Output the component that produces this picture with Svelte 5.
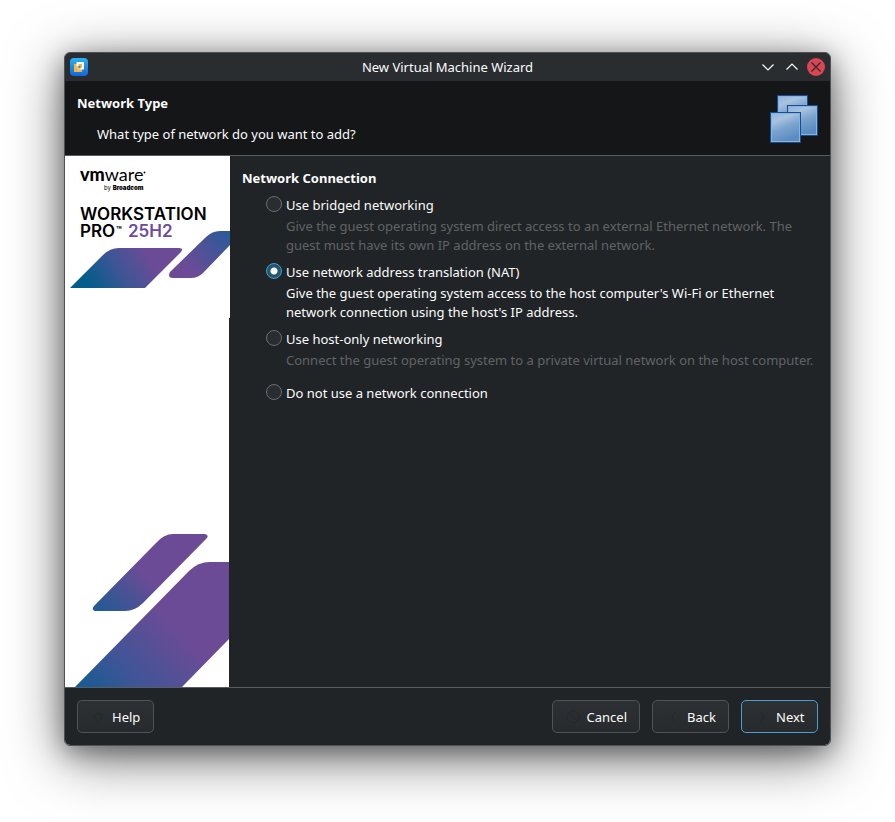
<script>
  const options = [
    {
      id: 'bridged',
      label: 'Use bridged networking',
      text: 'Give the guest operating system direct access to an external Ethernet network. The guest must have its own IP address on the external network.'
    },
    {
      id: 'nat',
      label: 'Use network address translation (NAT)',
      text: "Give the guest operating system access to the host computer's Wi-Fi or Ethernet network connection using the host's IP address."
    },
    {
      id: 'hostonly',
      label: 'Use host-only networking',
      text: 'Connect the guest operating system to a private virtual network on the host computer.'
    },
    { id: 'none', label: 'Do not use a network connection', text: '' }
  ];

  let selected = $state('nat');
</script>

<div class="desktop">
  <main class="window">
    <header class="titlebar">
      <svg class="appicon" viewBox="0 0 18 18" aria-hidden="true">
        <defs>
          <linearGradient id="tile" x1="0" y1="0" x2="0" y2="1">
            <stop offset="0" stop-color="#27b4f2" />
            <stop offset="1" stop-color="#1267dc" />
          </linearGradient>
        </defs>
        <rect width="18" height="18" rx="4" fill="url(#tile)" />
        <rect x="5" y="7" width="6" height="6" fill="none" stroke="#f9b53c" stroke-width="2" />
        <rect x="7.500" y="5" width="5.500" height="5.500" fill="none" stroke="#fff" stroke-width="2" />
        <path d="M6.500 8h2v3.500h-2zM6.500 10h4v2h-4z" fill="#fbc862" />
        <path d="M8.500 8h2v2h-2z" fill="#2e8fdc" />
      </svg>
      <h1>New Virtual Machine Wizard</h1>
      <div class="controls">
        <button type="button" aria-label="Minimize">
          <svg viewBox="0 0 18 18"><path d="M3.500 6.500 9 12l5.500-5.500" fill="none" stroke="#fcfcfc" stroke-width="1.200" /></svg>
        </button>
        <button type="button" aria-label="Maximize">
          <svg viewBox="0 0 18 18"><path d="M3.500 11.500 9 6l5.500 5.500" fill="none" stroke="#fcfcfc" stroke-width="1.200" /></svg>
        </button>
        <button type="button" aria-label="Close">
          <svg viewBox="0 0 18 18">
            <circle cx="9" cy="9" r="9" fill="#da4453" />
            <path d="m4.500 4.500 9 9m0-9-9 9" fill="none" stroke="#292c30" stroke-width="1.200" />
          </svg>
        </button>
      </div>
    </header>

    <section class="intro">
      <div>
        <h2>Network Type</h2>
        <p>What type of network do you want to add?</p>
      </div>
      <svg class="neticon" viewBox="0 0 48 48" aria-hidden="true">
        <defs>
          <linearGradient id="pane" x1="0" y1="0" x2="0.400" y2="1">
            <stop offset="0" stop-color="#8fb0d6" />
            <stop offset="0.300" stop-color="#a9c3e0" />
            <stop offset="0.600" stop-color="#7ba3cf" />
            <stop offset="1" stop-color="#5a8cc0" />
          </linearGradient>
        </defs>
        {#each [[7, 0], [17, 10], [0, 17]] as [x, y]}
          <rect x={x + 0.5} y={y + 0.5} width="30" height="30" fill="url(#pane)" stroke="#1d4c8c" />
          <rect x={x + 1.5} y={y + 1.5} width="28" height="28" fill="none" stroke="#82b4ea" />
        {/each}
      </svg>
    </section>

    <div class="body">
      <aside>
        <svg class="brand" viewBox="0 0 165 162" role="img" aria-label="VMware Workstation Pro 25H2">
          <defs>
            <linearGradient id="band1" x1="20" y1="136" x2="90" y2="92" gradientUnits="userSpaceOnUse">
              <stop offset="0.100" stop-color="#045c8a" />
              <stop offset="0.500" stop-color="#3f5596" />
              <stop offset="0.900" stop-color="#6c4b96" />
            </linearGradient>
            <linearGradient id="band2" x1="118" y1="116" x2="162" y2="76" gradientUnits="userSpaceOnUse">
              <stop offset="0.100" stop-color="#6c4b96" />
              <stop offset="1" stop-color="#2b5a98" />
            </linearGradient>
          </defs>
          <text x="15" y="25" class="vm">vm<tspan class="ware">ware</tspan></text>
          <circle cx="79.500" cy="16.500" r="0.900" />
          <text x="39" y="34" class="by">by <tspan class="bc">Broadcom</tspan></text>
          <text class="product">
            <tspan x="15" y="64">WORKSTATION</tspan>
            <tspan x="15" y="81">PRO</tspan>
            <tspan x="63" y="81" class="version">25H2</tspan>
          </text>
          <text x="51" y="77" class="tm">™</text>
          <path d="M5 132 38 99Q45 92 54 92H114Q119 92 116 96L80 132Z" fill="url(#band1)" />
          <path d="M165 75H155Q147 75 141 81L105 116Q102 122 108 122H126Q133 122 138 117L165 89Z" fill="url(#band2)" />
        </svg>
        <div class="art">
          <svg viewBox="0 0 164 160" aria-hidden="true">
            <defs>
              <linearGradient id="band3" x1="40" y1="94" x2="84" y2="50" gradientUnits="userSpaceOnUse">
                <stop offset="0" stop-color="#1f5b93" />
                <stop offset="1" stop-color="#6c4b96" />
              </linearGradient>
              <linearGradient id="band4" x1="28" y1="176" x2="112" y2="100" gradientUnits="userSpaceOnUse">
                <stop offset="0" stop-color="#155c92" />
                <stop offset="0.400" stop-color="#3e5597" />
                <stop offset="1" stop-color="#6c4b96" />
              </linearGradient>
            </defs>
            <path d="M108 7H140Q144 8 142 11L78 76Q70 84 60 84H30Q26 83 29 79L91 16Q99 7 108 7Z" fill="url(#band3)" />
            <path d="M164 35H145Q133 35 124 44L10 160H117L164 112Z" fill="url(#band4)" />
          </svg>
        </div>
      </aside>

      <fieldset>
        <legend>Network Connection</legend>
        {#each options as option}
          <div class="option" class:active={selected === option.id}>
            <input type="radio" name="network" id={option.id} value={option.id} bind:group={selected} />
            <label for={option.id}>{option.label}</label>
            {#if option.text}<p>{option.text}</p>{/if}
          </div>
        {/each}
      </fieldset>
    </div>

    <footer>
      <button type="button" class="btn help">
        <svg viewBox="0 0 16 16"><path d="m8 4 5 4-5 5-5-5z" /></svg>Help
      </button>
      <button type="button" class="btn">
        <svg viewBox="0 0 16 16"><circle cx="8" cy="8" r="6" /><path d="m4 4 8 8" /></svg>Cancel
      </button>
      <button type="button" class="btn">
        <svg viewBox="0 0 16 16"><path d="m10 3-3 5 3 5" /></svg>Back
      </button>
      <button type="button" class="btn primary">
        <svg viewBox="0 0 16 16"><path d="m6 3 4 5-4 5" /></svg>Next
      </button>
    </footer>
  </main>
</div>

<style>
  :global(body) {
    margin: 0;
    background: #fff;
  }
  .desktop {
    box-sizing: border-box;
    min-height: 100vh;
    padding: 52px 64px 76px;
    display: flex;
    font: 13px/20px 'Noto Sans', sans-serif;
    color: #fcfcfc;
  }
  .window {
    flex: 1;
    min-width: 0;
    display: flex;
    flex-direction: column;
    border: 1px solid #4e5255;
    border-radius: 6px;
    background: #202426;
    background-clip: padding-box;
    box-shadow:
      0 12px 56px rgba(0, 0, 0, 0.55),
      0 6px 24px rgba(0, 0, 0, 0.35);
  }
  h1, h2, p, fieldset, legend {
    margin: 0;
    padding: 0;
    font-size: inherit;
  }
  svg {
    display: block;
  }
  .titlebar {
    display: grid;
    grid-template-columns: 1fr auto 1fr;
    align-items: center;
    height: 28px;
    padding: 0 5px;
    background: #292d30;
    border-radius: 5px 5px 0 0;
  }
  h1 {
    font-weight: 400;
  }
  .appicon {
    width: 18px;
    height: 18px;
  }
  .controls {
    display: flex;
    justify-content: flex-end;
    gap: 6px;
  }
  .controls button {
    width: 18px;
    height: 18px;
    padding: 0;
    border: 0;
    background: none;
  }
  .intro {
    display: flex;
    justify-content: space-between;
    align-items: center;
    padding: 12px 12px 11px;
    background: #141618;
    border-bottom: 1px solid #5a5d60;
  }
  .intro h2 {
    font-weight: 700;
  }
  .intro p {
    margin: 11px 0 0 20px;
  }
  .neticon {
    width: 48px;
    height: 48px;
    flex: none;
  }
  .body {
    flex: 1;
    display: flex;
  }
  aside {
    display: flex;
    flex-direction: column;
    width: 165px;
    flex: none;
  }
  .brand {
    width: 165px;
    height: 162px;
    background: #fff;
  }
  .art {
    flex: 1;
    display: flex;
    align-items: flex-end;
    width: 164px;
    background: #fff;
  }
  .art svg {
    width: 164px;
    height: 160px;
  }
  .vm {
    font: 900 18px Lato, sans-serif;
  }
  .ware {
    font-weight: 400;
  }
  .by {
    font: 400 6px Inter, sans-serif;
  }
  .bc {
    font-weight: 900;
  }
  .product {
    font: 600 17px Inter, sans-serif;
  }
  .version {
    fill: #6c4b9e;
  }
  .tm {
    font: 700 9px Inter, sans-serif;
  }
  fieldset {
    flex: 1;
    min-width: 0;
    border: 0;
    padding: 12px;
  }
  legend {
    float: left;
    width: 100%;
    font-weight: 700;
    margin-bottom: 6px;
  }
  .option {
    clear: both;
    display: grid;
    grid-template-columns: 16px 1fr;
    column-gap: 4px;
    align-items: center;
    margin: 0 0 6px 24px;
  }
  .option:last-child {
    margin-top: 12px;
  }
  .option label {
    line-height: 22px;
  }
  .option p {
    grid-column: 2;
    margin-top: 1px;
    line-height: 19px;
    color: #606366;
  }
  .option.active p {
    color: #fcfcfc;
  }
  input {
    appearance: none;
    box-sizing: border-box;
    width: 16px;
    height: 16px;
    margin: 0 0 2px;
    border: 1px solid #6a6d70;
    border-radius: 50%;
    background: #292c30;
  }
  input:checked {
    border-color: #3f9fd0;
    background: radial-gradient(circle, #fcfcfc 3px, #26556f 4px);
  }
  footer {
    display: flex;
    gap: 12px;
    padding: 12px;
    border-top: 1px solid #5a5d60;
  }
  .btn {
    display: flex;
    align-items: center;
    gap: 6px;
    height: 33px;
    min-width: 77px;
    padding: 0 12px;
    border: 1px solid #505356;
    border-radius: 5px;
    background: linear-gradient(#2d3033, #282b2e);
    color: inherit;
    font: inherit;
  }
  .btn svg {
    width: 16px;
    height: 16px;
    fill: none;
    stroke: #25282b;
  }
  .help {
    margin-right: auto;
  }
  .primary {
    border-color: #4a9fd0;
  }
</style>
